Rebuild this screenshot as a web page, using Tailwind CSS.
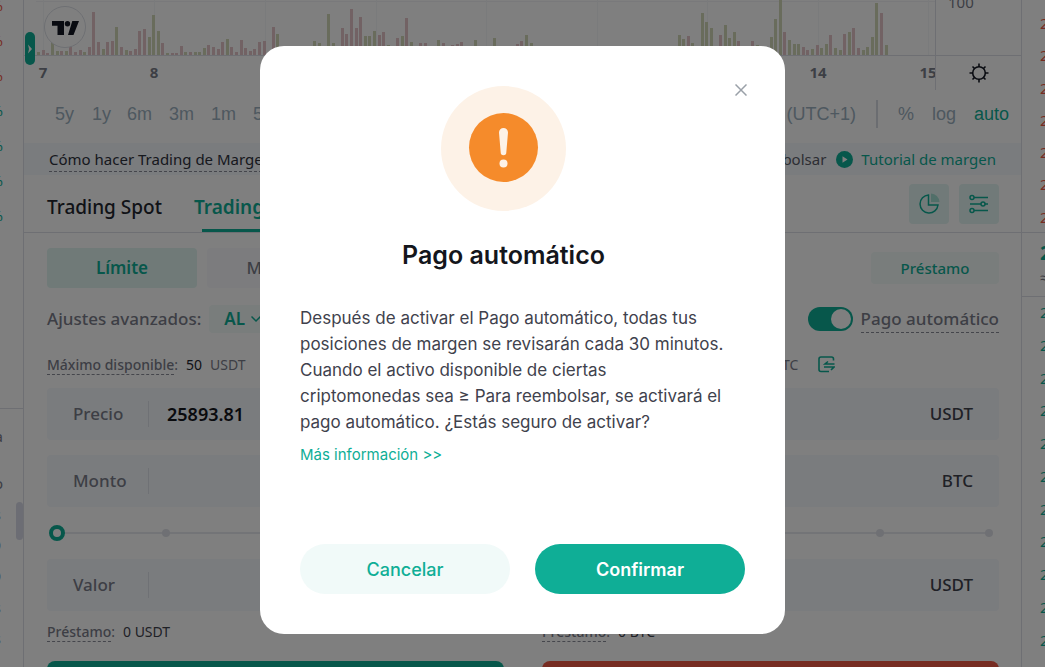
<!DOCTYPE html>
<html lang="es">
<head>
    <meta charset="UTF-8">
    <meta name="viewport" content="width=device-width, initial-scale=1.0">
    <title>Trading de Margen</title>
    <script src="https://cdn.jsdelivr.net/npm/@tailwindcss/browser@4"></script>
</head>
<body class="h-screen overflow-hidden bg-white font-['Noto_Sans',sans-serif] text-[#7a7d8a]">
    <div class="flex h-full overflow-hidden">

        <!-- market list -->
        <aside class="relative w-6 shrink-0 overflow-hidden border-r border-[#dcdfe6] text-[15px]">
            <div class="flex h-[409px] flex-col items-end border-b border-[#dcdfe6] pr-5 leading-[35px]">
                <div class="-mt-3 text-[#ef5844]">-1.2%</div>
                <div class="text-[#ef5844]">-0.8%</div>
                <div class="text-[#ef5844]">-2.1%</div>
                <div class="text-[#0fae96]">+1.4%</div>
                <div class="text-[#0fae96]">+0.6%</div>
                <div class="text-[#0fae96]">+3.0%</div>
                <div class="text-[#0fae96]">+0.2%</div>
            </div>
            <div class="flex flex-col items-end pr-5 pt-3 leading-[31px]">
                <div class="mb-4">Hora</div>
                <div>Monto</div>
                <div class="pr-0.5">3s</div>
                <div class="pr-0.5">9</div>
                <div class="pr-0.5">9</div>
                <div class="pr-0.5">3s</div>
                <div class="pr-0.5">3s</div>
            </div>
            <div class="absolute right-0 top-[502px] h-[38px] w-[7px] rounded-full bg-[#d9dbe8]"></div>
        </aside>

        <main class="min-w-0 flex-1">

            <!-- chart -->
            <section class="relative h-[143px]">
                <div class="flex h-[90px]">
                    <div class="relative flex-1 overflow-hidden border-r border-[#dcdfe6]">
                        <svg id="volume" class="block h-14 w-full border-b border-[#dcdfe6]"></svg>
                        <svg class="block h-8 w-full fill-[#7b7e8a] text-[15px] font-bold" text-anchor="middle">
                            <text x="19" y="22">7</text>
                            <text x="130" y="22">8</text>
                            <text x="794" y="22">14</text>
                            <text x="904" y="22">15</text>
                        </svg>
                    </div>
                    <div class="w-[85px]">
                        <div class="h-14 overflow-hidden border-b border-[#dcdfe6] pl-3 text-[15px] leading-5"><div class="-mt-2">100</div></div>
                        <button class="flex h-[34px] w-full items-center justify-center" aria-label="Configuración">
                            <svg class="size-5" viewBox="0 0 20 20" fill="none" stroke="#131722" stroke-width="1.6">
                                <circle cx="10" cy="10" r="6.3"/>
                                <path d="M10 0.500v3.500M10 16v3.500M0.500 10h3.500M16 10h3.500M3.500 3.500l2 2M14.500 14.500l2 2M16.500 3.500l-2 2M5.500 14.500l-2 2"/>
                            </svg>
                        </button>
                    </div>
                </div>
                <div class="flex h-12 items-center pl-[31px] pr-3 font-['Liberation_Sans',Arial,sans-serif] text-[18px] text-[#9cb0c0]">
                    <button class="w-[37px] text-left">5y</button>
                    <button class="w-[35px] text-left">1y</button>
                    <button class="w-[42px] text-left">6m</button>
                    <button class="w-[42px] text-left">3m</button>
                    <button class="w-[42px] text-left">1m</button>
                    <button class="text-left">5d</button>
                    <span class="ml-auto">(UTC+1)</span>
                    <span class="ml-5 h-7 w-0.5 bg-[#d6dae3]"></span>
                    <button class="ml-5">%</button>
                    <button class="ml-[18px]">log</button>
                    <button class="ml-[18px] text-[#0fae96]">auto</button>
                </div>

                <svg class="absolute left-5 top-1.5 size-[42px]" viewBox="0 0 42 42">
                    <circle cx="21" cy="21" r="20.500" fill="#fff" stroke="#dcdfe6"/>
                    <path d="M8 15h12v14h-6.500v-9.300H8zM28.300 15H35l-5.500 14H24z" fill="#131722"/>
                    <circle cx="23.500" cy="17.800" r="2.700" fill="#131722"/>
                </svg>
                <button class="absolute left-px top-8 flex h-[33px] w-2.5 items-center justify-center rounded-md bg-[#0fae96]" aria-label="Mostrar panel">
                    <svg class="h-2.5 w-1.5" viewBox="0 0 6 10" fill="#fff"><path d="M1 0.500L5 5 1 9.500 2 5z"/></svg>
                </button>
            </section>

            <!-- help bar -->
            <div class="flex h-8 items-center bg-[#f5f8fd] px-[25px] text-[15px]">
                <a href="#" class="border-b border-dashed border-[#8a8d99] leading-6 text-[#2e323c]">Cómo hacer Trading de Margen</a>
                <span class="ml-auto text-[#5a5d68]">Para reembolsar</span>
                <svg class="ml-2.5 size-[17px]" viewBox="0 0 17 17"><circle cx="8.500" cy="8.500" r="8.500" fill="#0fae96"/><path d="M6.500 5.200v6.600l5-3.300z" fill="#fff"/></svg>
                <a href="#" class="ml-2 text-[#0fae96]">Tutorial de margen</a>
            </div>

            <!-- tabs -->
            <div class="flex h-[58px] items-center border-b border-[#dcdfe6] pl-[23px] pr-[22px]">
                <button class="pt-2 text-[19px] font-medium text-[#23262f]">Trading Spot</button>
                <button class="relative ml-8 h-full pt-2 text-[19px] font-semibold text-[#0fae96]">Trading de Margen
                    <span class="absolute bottom-0 left-2 right-2 h-[3px] bg-[#0fae96]"></span>
                </button>
                <button class="ml-auto flex size-10 items-center justify-center rounded bg-[#e3f5f2]" aria-label="Distribución">
                    <svg class="size-[22px]" viewBox="0 0 22 22"><path d="M10.500 2A9 9 0 1 0 20 12h-9.500z" fill="none" stroke="#0fae96" stroke-width="1.500"/><path d="M13 0.500a9 9 0 0 1 8.500 8.500H13z" fill="#a3dfd3"/></svg>
                </button>
                <button class="ml-2.5 flex size-10 items-center justify-center rounded bg-[#e3f5f2]" aria-label="Ajustes">
                    <svg class="size-5" viewBox="0 0 20 20" fill="none" stroke="#0fae96" stroke-width="1.500"><path d="M5 3.500h14M1 10h11M16 10h3M5 16.500h14"/><circle cx="3" cy="3.500" r="2"/><circle cx="14" cy="10" r="2"/><circle cx="3" cy="16.500" r="2"/></svg>
                </button>
            </div>

            <!-- order form -->
            <section class="pl-[23px] pr-[22px] pt-[15px]">
                <div class="flex items-center gap-2.5 font-medium">
                    <button class="h-10 w-[150px] rounded bg-[#e0f5f1] text-[17px] font-semibold text-[#0fae96]">Límite</button>
                    <button class="h-10 w-[150px] rounded bg-[#f8f9fc] text-[17px]">Mercado</button>
                    <button class="ml-auto h-8 w-32 rounded bg-[#f3faf9] text-[15px] text-[#0fae96]">Préstamo</button>
                </div>
                <div class="mt-[15px] flex h-8 items-center text-[17px] font-medium">
                    <label for="advanced">Ajustes avanzados:</label>
                    <div class="relative ml-2">
                        <select id="advanced" class="h-7 w-[60px] appearance-none rounded bg-[#f3faf9] pl-[15px] font-semibold text-[#0fae96]"><option>AL</option><option>IOC</option></select>
                        <svg class="absolute right-2 top-2.5 h-2 w-2.5" viewBox="0 0 10 8" fill="none" stroke="#0fae96" stroke-width="1.500"><path d="M0.500 1.500L5 6l4.500-4.500"/></svg>
                    </div>
                    <input id="autopay" type="checkbox" checked class="peer sr-only">
                    <label for="autopay" class="ml-auto flex h-6 w-[45px] items-center justify-end rounded-full bg-[#0fae96] pr-0.5" aria-label="Pago automático"><span class="size-5 rounded-full bg-white"></span></label>
                    <label for="autopay" class="ml-2 border-b border-dashed border-[#8a8d99] leading-[26px]">Pago automático</label>
                </div>

                <div class="mt-[15px] grid grid-cols-2 gap-x-[38px]">
                    <!-- buy -->
                    <form>
                        <div class="flex h-[38px] items-start pt-1.5 text-[14px] leading-[18px]">
                            <span class="border-b border-dashed border-[#8a8d99] font-medium">Máximo disponible</span>:<span class="ml-2 text-[#23262f]">50</span><span class="ml-2">USDT</span>
                        </div>
                        <div class="flex h-[52px] items-center rounded bg-[#f5f8fc] px-[26px] text-[17px]">
                            <label for="buyPrice" class="w-[76px] border-r border-[#dfe2ea] font-medium">Precio</label>
                            <input id="buyPrice" type="text" value="25893.81" class="ml-[18px] w-0 min-w-0 flex-1 text-[18px] font-semibold text-[#14161c]">
                            <span class="font-medium text-[#3f424d]">USDT</span>
                        </div>
                        <div class="mt-[15px] flex h-[52px] items-center rounded bg-[#f5f8fc] px-[26px] text-[17px]">
                            <label for="buyAmount" class="w-[76px] border-r border-[#dfe2ea] font-medium">Monto</label>
                            <input id="buyAmount" type="text" class="ml-[18px] w-0 min-w-0 flex-1">
                            <span class="font-medium text-[#3f424d]">BTC</span>
                        </div>
                        <div class="relative my-[18px] h-4">
                            <div class="mx-2.5 flex h-full items-center"><div class="h-0.5 flex-1 bg-[#e6e8ee]"></div></div>
                            <div class="absolute inset-x-1.5 inset-y-1 flex justify-between"><i class="size-2 rounded-full bg-[#dfe1e8]"></i><i class="size-2 rounded-full bg-[#dfe1e8]"></i><i class="size-2 rounded-full bg-[#dfe1e8]"></i><i class="size-2 rounded-full bg-[#dfe1e8]"></i><i class="size-2 rounded-full bg-[#dfe1e8]"></i></div>
                            <input type="range" value="0" aria-label="Porcentaje" class="absolute inset-x-0.5 inset-y-0 appearance-none bg-transparent [&::-webkit-slider-thumb]:size-4 [&::-webkit-slider-thumb]:appearance-none [&::-webkit-slider-thumb]:rounded-full [&::-webkit-slider-thumb]:border-4 [&::-webkit-slider-thumb]:border-solid [&::-webkit-slider-thumb]:border-[#0fae96] [&::-webkit-slider-thumb]:bg-white">
                        </div>
                        <div class="flex h-[52px] items-center rounded bg-[#f5f8fc] px-[26px] text-[17px]">
                            <label for="buyTotal" class="w-[76px] border-r border-[#dfe2ea] font-medium">Valor</label>
                            <input id="buyTotal" type="text" class="ml-[18px] w-0 min-w-0 flex-1">
                            <span class="font-medium text-[#3f424d]">USDT</span>
                        </div>
                        <div class="flex h-[50px] items-start pt-3 text-[14px] leading-[18px]">
                            <span class="border-b border-dashed border-[#8a8d99] font-medium">Préstamo</span>:<span class="ml-2 text-[#3f424d]">0 USDT</span>
                        </div>
                        <button type="button" class="h-[50px] w-full rounded-lg bg-[#0fae96] text-[17px] text-white">Comprar</button>
                    </form>

                    <!-- sell -->
                    <form>
                        <div class="flex h-[38px] items-start pt-1.5 text-[14px] leading-[18px]">
                            <span class="border-b border-dashed border-[#8a8d99] font-medium">Máximo disponible</span>:<span class="ml-2 text-[#23262f]">0.001931062</span><span class="ml-2">BTC</span>
                            <svg class="ml-5 size-[17px]" viewBox="0 0 17 17" fill="none" stroke="#0fae96" stroke-width="1.600"><path d="M15.500 4.500V3A2 2 0 0 0 13.500 1H3A2 2 0 0 0 1 3v10.500a2 2 0 0 0 2 2h8"/><path d="M16.500 8H7l3-2.500M6 11h10l-3 3"/></svg>
                        </div>
                        <div class="flex h-[52px] items-center rounded bg-[#f5f8fc] px-[26px] text-[17px]">
                            <label for="sellPrice" class="w-[76px] border-r border-[#dfe2ea] font-medium">Precio</label>
                            <input id="sellPrice" type="text" value="25893.81" class="ml-[18px] w-0 min-w-0 flex-1 text-[18px] font-semibold text-[#14161c]">
                            <span class="font-medium text-[#3f424d]">USDT</span>
                        </div>
                        <div class="mt-[15px] flex h-[52px] items-center rounded bg-[#f5f8fc] px-[26px] text-[17px]">
                            <label for="sellAmount" class="w-[76px] border-r border-[#dfe2ea] font-medium">Monto</label>
                            <input id="sellAmount" type="text" class="ml-[18px] w-0 min-w-0 flex-1">
                            <span class="font-medium text-[#3f424d]">BTC</span>
                        </div>
                        <div class="relative my-[18px] h-4">
                            <div class="mx-2.5 flex h-full items-center"><div class="h-0.5 flex-1 bg-[#e6e8ee]"></div></div>
                            <div class="absolute inset-x-1.5 inset-y-1 flex justify-between"><i class="size-2 rounded-full bg-[#dfe1e8]"></i><i class="size-2 rounded-full bg-[#dfe1e8]"></i><i class="size-2 rounded-full bg-[#dfe1e8]"></i><i class="size-2 rounded-full bg-[#dfe1e8]"></i><i class="size-2 rounded-full bg-[#dfe1e8]"></i></div>
                            <input type="range" value="0" aria-label="Porcentaje" class="absolute inset-x-0.5 inset-y-0 appearance-none bg-transparent [&::-webkit-slider-thumb]:size-4 [&::-webkit-slider-thumb]:appearance-none [&::-webkit-slider-thumb]:rounded-full [&::-webkit-slider-thumb]:border-4 [&::-webkit-slider-thumb]:border-solid [&::-webkit-slider-thumb]:border-[#0fae96] [&::-webkit-slider-thumb]:bg-white">
                        </div>
                        <div class="flex h-[52px] items-center rounded bg-[#f5f8fc] px-[26px] text-[17px]">
                            <label for="sellTotal" class="w-[76px] border-r border-[#dfe2ea] font-medium">Valor</label>
                            <input id="sellTotal" type="text" class="ml-[18px] w-0 min-w-0 flex-1">
                            <span class="font-medium text-[#3f424d]">USDT</span>
                        </div>
                        <div class="flex h-[50px] items-start pt-3 text-[14px] leading-[18px]">
                            <span class="border-b border-dashed border-[#8a8d99] font-medium">Préstamo</span>:<span class="ml-2 text-[#3f424d]">0 BTC</span>
                        </div>
                        <button type="button" class="h-[50px] w-full rounded-lg bg-[#ef5844] text-[17px] text-white">Vender</button>
                    </form>
                </div>
            </section>
        </main>

        <!-- order book -->
        <aside class="w-6 shrink-0 overflow-hidden border-l border-[#dcdfe6] text-[15px]">
            <div class="flex h-[233px] flex-col justify-between border-b border-[#dcdfe6] pb-1 pl-[18px] pt-3 text-[#ef5844]">
                <span>25901</span><span>25900</span><span>25899</span><span>25898</span><span>25897</span><span>25896</span><span>25895</span>
            </div>
            <div class="flex h-16 flex-col border-b border-[#dcdfe6] pl-[18px] pt-1.5">
                <strong class="text-[20px] leading-7 text-[#0fae96]">25893</strong>
                <span class="leading-5">≈25893</span>
            </div>
            <div class="flex h-[358px] flex-col justify-between py-1 pl-[18px] text-[#0fae96]">
                <span>25892</span><span>25891</span><span>25890</span><span>25889</span><span>25888</span><span>25887</span><span>25886</span><span>25885</span><span>25884</span><span>25883</span><span>25882</span>
            </div>
        </aside>
    </div>

    <!-- modal -->
    <div class="fixed inset-0 flex items-center justify-center bg-black/50 pt-[13px] font-[Inter,sans-serif]">
        <div role="dialog" aria-modal="true" aria-labelledby="modalTitle" class="w-[525px] rounded-3xl bg-white p-10">
            <div class="flex items-start">
                <div class="flex flex-1 flex-col items-center">
                    <svg class="size-[125px]" viewBox="0 0 125 125">
                        <circle cx="62.500" cy="62.500" r="62.500" fill="#fdf2e7"/>
                        <circle cx="62.500" cy="61.500" r="34.500" fill="#f58b2b"/>
                        <path d="M58 46.500a4.500 4.500 0 0 1 9 0l-1.700 20a2.800 2.800 0 0 1-5.600 0z" fill="#fdf2e7"/>
                        <circle cx="62.500" cy="77.500" r="4" fill="#fdf2e7"/>
                    </svg>
                    <h2 id="modalTitle" class="mt-6 text-[25px] font-semibold leading-10 text-[#14161c]">Pago automático</h2>
                </div>
                <button class="-mr-0.5 flex h-2 w-10 items-center justify-end" aria-label="Cerrar">
                    <svg class="size-3" viewBox="0 0 12 12" fill="none" stroke="#9aa0a8" stroke-width="1.500"><path d="M0.500 0.500l11 11M11.500 0.500l-11 11"/></svg>
                </button>
            </div>
            <p class="mt-[30px] pr-4 text-[17px] leading-[26px] text-[#3f424d]">Después de activar el Pago automático, todas tus posiciones de margen se revisarán cada 30 minutos. Cuando el activo disponible de ciertas criptomonedas sea ≥ Para reembolsar, se activará el pago automático. ¿Estás seguro de activar?</p>
            <a href="#" class="mt-2 block text-[15px] leading-6 text-[#0fae96]">Más información &gt;&gt;</a>
            <div class="mt-[77px] flex gap-[25px] text-[18px]">
                <button class="h-[50px] flex-1 rounded-full bg-[#f1faf9] font-medium text-[#0fae96]">Cancelar</button>
                <button class="h-[50px] flex-1 rounded-full bg-[#0fae96] font-semibold text-white">Confirmar</button>
            </div>
        </div>
    </div>

    <script>
        // volume bars: [x, height, up/down]
        const bars = [
            [13,3,1],[18,5,0],[22,2,0],[27,13,1],[32,4,1],[36,4,0],[41,4,1],[45,9,0],[50,3,0],[55,5,0],[59,3,1],[64,8,0],
            [68,43,0],[73,13,0],[78,6,1],[82,13,0],[87,14,0],[91,28,1],[96,8,0],[101,5,1],[105,4,0],[110,6,0],[114,24,0],
            [119,26,0],[124,18,1],[128,40,1],[133,24,1],[137,12,0],[142,2,1],[147,2,0],[151,2,0],[156,9,0],[160,3,1],
            [165,3,0],[170,3,1],[174,3,1],[179,7,1],[183,10,0],[188,8,0],[193,6,0],[197,13,0],[202,16,1],[206,8,0],
            [211,3,0],[216,15,0],[220,7,0],[225,4,0],[229,6,0],[234,13,0],[239,14,0],[248,28,0],[252,21,1],[289,14,1],
            [294,12,1],[303,41,1],[308,12,1],[317,27,0],[321,21,0],[326,46,0],[331,27,0],[335,38,0],[340,19,1],[344,19,1],
            [349,24,1],[354,20,0],[358,23,0],[363,10,1],[372,17,0],[377,19,1],[381,37,0],[386,13,1],[395,12,0],[400,12,0],
            [413,15,1],[418,12,0],[427,10,0],[432,11,0],[436,13,0],[450,15,1],[469,17,1],[492,11,0],[496,14,0],[501,20,1],
            [506,12,1],[654,20,1],[658,16,1],[663,19,0],[667,12,1],[677,42,1],[681,33,1],[686,27,1],[695,20,0],[700,30,1],
            [704,17,1],[709,23,1],[713,14,0],[727,14,0],[732,10,1],[746,18,1],[750,36,1],[755,55,1],[759,23,0],[764,15,1],
            [769,11,1],[773,11,1],[778,8,0],[782,5,0],[787,6,1],[792,10,0],[796,7,1],[801,11,1],[805,20,0],[810,7,1],
            [815,5,1],[819,21,0],[824,23,1],[828,27,0],[833,7,0],[838,5,1],[842,8,1],[847,18,1],[851,52,1],[856,42,0],[861,10,1]
        ];
        let marks = '<rect x="12" y="1" width="100%" height="1" fill="#f2f3f6"/>';
        for (const x of [19, 130, 241, 352, 462, 573, 683, 794, 904]) {
            marks += `<rect x="${x}" y="0" width="1" height="55" fill="#f5f6f8"/>`;
        }
        for (const [x, h, up] of bars) {
            marks += `<rect x="${x}" y="${55 - h}" width="3" height="${h}" fill="${up ? '#d3d8b8' : '#e4c4c8'}"/>`;
        }
        document.getElementById("volume").innerHTML = marks;
    </script>
</body>
</html>
